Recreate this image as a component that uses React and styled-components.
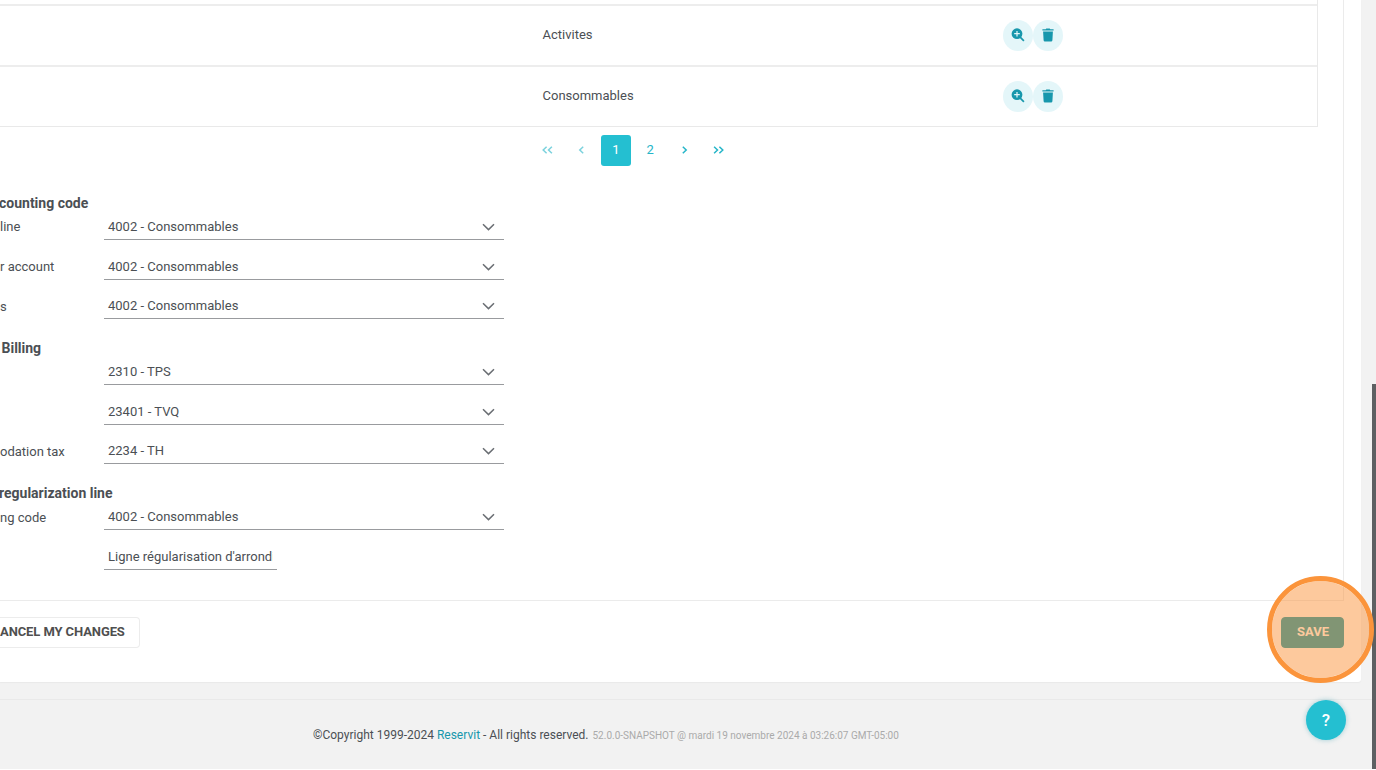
import styled, { createGlobalStyle } from "styled-components";

const GlobalStyle = createGlobalStyle`
    body {
        margin: 0;
        background: #fff;
        overflow: hidden;
    }

    * {
        box-sizing: border-box;
    }
`;

const Page = styled.div`
    position: relative;
    width: 1376px;
    height: 769px;
    overflow: hidden;
    display: flex;
    flex-direction: column;
    background: #f2f2f2;
    color: #4b4f54;
    font-family: Roboto, "Liberation Sans", sans-serif;
    font-size: 13px;
    white-space: nowrap;
`;

const Card = styled.main`
    width: 1361px;
    height: 682px;
    background: #fff;
    border-bottom-right-radius: 3px;
    box-shadow: 0 1px 1px #e9e9e9;
`;

const Panel = styled.section`
    width: 1344px;
    height: 601px;
    border: solid #ebebeb;
    border-width: 0 1px 1px 0;
`;

const Table = styled.div`
    width: 1318px;
    padding-top: 4px;
    border: solid #e9e9e9;
    border-width: 0 1px 1px 0;
`;

const TableRow = styled.div`
    display: grid;
    grid-template-columns: 542.5px 460.5px auto;
    align-items: center;
    height: 61px;
    border-top: 2px solid #ededed;
`;

const NameCell = styled.div`
    grid-column: 2;
    line-height: 16px;
    padding-bottom: 1px;
`;

const Actions = styled.div`
    display: flex;
`;

const RoundButton = styled.button`
    display: flex;
    align-items: center;
    justify-content: center;
    width: 30px;
    height: 31px;
    padding: 0 1px 1px 0;
    border: 0;
    border-radius: 50%;
    background: #e4f6f9;
    color: #1797ac;
`;

const Pagination = styled.nav`
    display: flex;
    gap: 4.2px;
    padding: 8px 0 0 532.5px;
`;

const PageButton = styled.button`
    display: flex;
    align-items: center;
    justify-content: center;
    width: 30px;
    height: 31px;
    padding: 0 0 2px;
    border: 0;
    border-radius: 3px;
    font: inherit;
    background: ${({ $active }) => ($active ? "#24bfd1" : "transparent")};
    color: ${({ $active }) => ($active ? "#fff" : "#24b5c8")};
    opacity: ${({ $disabled }) => ($disabled ? 0.6 : 1)};

    svg {
        margin-top: 1px;
    }
`;

const Settings = styled.div`
    display: flex;
    flex-direction: column;
    gap: 21px;
    padding-top: 29px;
`;

const Heading = styled.h4`
    margin: 0 0 0 ${({ $shift }) => $shift || 0}px;
    height: 17px;
    font-size: 14px;
    line-height: 17px;
    font-weight: 700;
`;

const FieldRow = styled.div`
    display: flex;
    align-items: flex-end;
    height: ${({ $height }) => $height}px;
`;

const Label = styled.label`
    flex: 0 0 104px;
    height: ${({ $low }) => ($low ? 25 : 26)}px;
    line-height: 26px;
`;

const Select = styled.div`
    display: flex;
    align-items: center;
    justify-content: space-between;
    width: 400px;
    height: 27px;
    padding: 0 9px 0 4px;
    border-bottom: 1px solid #999b9e;

    svg {
        margin-top: 2px;
    }
`;

const TextInput = styled.input`
    width: 173px;
    height: 27px;
    padding: 0 4px;
    border: 0;
    border-bottom: 1px solid #999b9e;
    background: transparent;
    color: inherit;
    font: inherit;
    outline: 0;
`;

const ButtonBar = styled.div`
    display: flex;
    justify-content: space-between;
    width: 1344px;
    padding-top: 16px;
`;

const Button = styled.button`
    width: ${({ $width }) => $width}px;
    height: 31px;
    padding: 0 ${({ $primary }) => ($primary ? 14 : 15)}px 2px 0;
    border: 1px solid ${({ $primary }) => ($primary ? "#0797ad" : "#ececec")};
    border-left-width: ${({ $primary }) => ($primary ? 1 : 0)}px;
    border-radius: ${({ $primary }) => ($primary ? "4px" : "0 4px 4px 0")};
    background: ${({ $primary }) => ($primary ? "#0797ad" : "#fff")};
    color: ${({ $primary }) => ($primary ? "#fff" : "#4f4f4f")};
    font: 700 13px Roboto, sans-serif;
    text-align: right;
    letter-spacing: ${({ $primary }) => ($primary ? 0 : -0.1)}px;
    white-space: nowrap;
`;

const Footer = styled.footer`
    display: flex;
    align-items: baseline;
    height: 70px;
    margin-top: 17px;
    padding: 26px 0 0 313px;
    border-top: 1px solid #e9e9e9;
    font-size: 12px;
    line-height: 18px;
`;

const Brand = styled.a`
    color: #1797ac;
`;

const Version = styled.small`
    margin-left: 4px;
    color: #aaa;
    font-size: 10px;
`;

const HelpButton = styled.button`
    position: absolute;
    left: 1306px;
    top: 700px;
    width: 40px;
    height: 40px;
    padding: 0;
    border: 0;
    border-radius: 50%;
    background: #24bfd1;
    box-shadow: 0 0 5px rgba(36, 150, 170, 0.4);
    color: #fff;
    font: 500 17px Roboto, sans-serif;
`;

const ScrollThumb = styled.div`
    position: absolute;
    right: 0;
    top: 384px;
    width: 4px;
    bottom: 0;
    background: #5d6062;
`;

const ClickMarker = styled.div`
    position: absolute;
    left: 1267px;
    top: 576px;
    width: 107px;
    height: 107px;
    border: 5px solid #fb943b;
    border-radius: 50%;
    background: rgba(251, 148, 59, 0.5);
    background-clip: padding-box;
`;

const ZoomIcon = () => (
    <svg width="14" height="14" viewBox="0 0 14 14">
        <circle cx="6" cy="5.7" r="5.4" fill="currentColor" />
        <path d="M9.2 9.2 12.9 12.9" stroke="currentColor" strokeWidth="1.7" />
        <path d="M6 2.9v5.6M3.2 5.7h5.6" stroke="#e4f6f9" strokeWidth="1.2" />
    </svg>
);

const TrashIcon = () => (
    <svg width="12" height="14" viewBox="0 0 12 14" fill="currentColor">
        <path d="M.4 1.2h3.3L4.3.5h3.4l.6.7h3.3v1.4H.4zM1.1 3.5h9.8l-.5 8.8q-.1 1.2-1.3 1.2H2.9q-1.2 0-1.3-1.2z" />
    </svg>
);

const ChevronDown = () => (
    <svg width="13" height="8" viewBox="0 0 13 8">
        <path d="M1 1.2 6.5 6.6 12 1.2" fill="none" stroke="#6a6e73" strokeWidth="1.5" />
    </svg>
);

const Arrow = ({ double, right }) => (
    <svg width="11" height="8" viewBox="0 0 11 8">
        <path
            d={double ? "M4.6.8 1.2 4 4.6 7.2M9.9.8 6.5 4 9.9 7.2" : "M7.2.8 3.8 4 7.2 7.2"}
            transform={right ? "translate(11 0) scale(-1 1)" : undefined}
            fill="none"
            stroke="currentColor"
            strokeWidth="1.5"
        />
    </svg>
);

const products = ["Activites", "Consommables"];

const groups = [
    {
        title: "counting code",
        shift: -1,
        fields: [
            { label: "line", value: "4002 - Consommables", height: 28 },
            { label: "r account", value: "4002 - Consommables", height: 40 },
            { label: "s", value: "4002 - Consommables", height: 39, low: true },
        ],
    },
    {
        title: "Billing",
        shift: 1.5,
        fields: [
            { label: "", value: "2310 - TPS", height: 28 },
            { label: "", value: "23401 - TVQ", height: 40 },
            { label: "odation tax", value: "2234 - TH", height: 39, low: true },
        ],
    },
    {
        title: "regularization line",
        shift: -1,
        fields: [
            { label: "ng code", value: "4002 - Consommables", height: 28, low: true },
            { label: "", value: "Ligne régularisation d'arrondi", height: 40, input: true },
        ],
    },
];

export default function App() {
    return (
        <>
            <GlobalStyle />
            <Page>
                <Card>
                    <Panel>
                        <Table>
                            {products.map((name) => (
                                <TableRow key={name}>
                                    <NameCell>{name}</NameCell>
                                    <Actions>
                                        <RoundButton><ZoomIcon /></RoundButton>
                                        <RoundButton><TrashIcon /></RoundButton>
                                    </Actions>
                                </TableRow>
                            ))}
                        </Table>
                        <Pagination>
                            <PageButton $disabled><Arrow double /></PageButton>
                            <PageButton $disabled><Arrow /></PageButton>
                            <PageButton $active>1</PageButton>
                            <PageButton>2</PageButton>
                            <PageButton><Arrow right /></PageButton>
                            <PageButton><Arrow double right /></PageButton>
                        </Pagination>
                        <Settings>
                            {groups.map(({ title, shift, fields }) => (
                                <div key={title}>
                                    <Heading $shift={shift}>{title}</Heading>
                                    {fields.map(({ label, value, height, low, input }) => (
                                        <FieldRow key={label + value} $height={height}>
                                            <Label $low={low}>{label}</Label>
                                            {input ? (
                                                <TextInput defaultValue={value} />
                                            ) : (
                                                <Select>
                                                    {value}
                                                    <ChevronDown />
                                                </Select>
                                            )}
                                        </FieldRow>
                                    ))}
                                </div>
                            ))}
                        </Settings>
                    </Panel>
                    <ButtonBar>
                        <Button $width={140}>ANCEL MY CHANGES</Button>
                        <Button $width={63} $primary>SAVE</Button>
                    </ButtonBar>
                </Card>
                <Footer>
                    <span>©Copyright 1999-2024 <Brand>Reservit</Brand> - All rights reserved.</span>
                    <Version>52.0.0-SNAPSHOT @ mardi 19 novembre 2024 à 03:26:07 GMT-05:00</Version>
                </Footer>
                <ScrollThumb />
                <HelpButton>?</HelpButton>
                <ClickMarker />
            </Page>
        </>
    );
}
